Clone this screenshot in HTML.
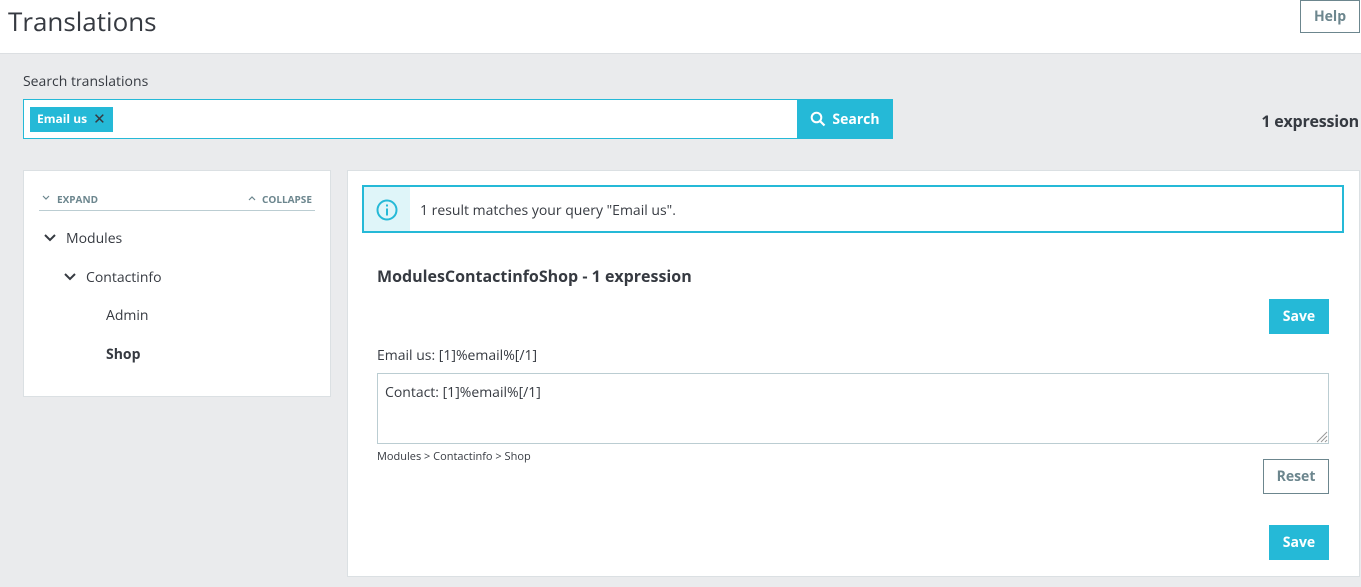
<!DOCTYPE html>
<html><head><meta charset="utf-8"><style>
*{box-sizing:border-box;margin:0;padding:0}
body{width:1361px;height:587px;background:#eaebed;font-family:"Open Sans","Liberation Sans",sans-serif;color:#363a41;position:relative;overflow:hidden}
.a{position:absolute;white-space:nowrap}
.btn{position:absolute;background:#25b9d7;color:#fff;font-weight:bold;font-size:14px;display:flex;align-items:center;justify-content:center}
</style></head><body>
<div class="a" style="left:0;top:0;width:1361px;height:54px;background:#fff;border-bottom:1px solid #dcdfe2"></div>
<div class="a" style="left:8px;top:3px;font-size:26px;color:#363a41">Translations</div>
<div class="a" style="left:1300px;top:0;width:60px;height:33px;border:1px solid #6c868e;color:#6c868e;font-weight:bold;font-size:14px;display:flex;align-items:center;justify-content:center">Help</div>

<div class="a" style="left:23px;top:72px;font-size:14px">Search translations</div>
<div class="a" style="left:23px;top:99px;width:775px;height:40px;background:#fff;border:1px solid #25b9d7"></div>
<div class="a" style="left:30px;top:107px;width:83px;height:25px;background:#25b9d7;color:#fff;font-size:12px;font-weight:bold;padding:3px 0 0 7px;line-height:17px">Email us <span style="font-weight:normal;font-size:15px;color:#363a41;position:relative;top:1px;left:3px">✕</span></div>
<div class="btn" style="left:797px;top:99px;width:96px;height:40px"><svg width="16" height="16" viewBox="0 0 16 16" style="margin-right:6px"><circle cx="6.5" cy="6.5" r="4.8" fill="none" stroke="#fff" stroke-width="2"/><path d="M10 10l4.5 4.5" stroke="#fff" stroke-width="2.2"/></svg>Search</div>
<div class="a" style="right:2px;top:110px;font-size:16px;font-weight:bold;letter-spacing:-0.2px">1 expression</div>

<div class="a" style="left:23px;top:170px;width:308px;height:227px;background:#fff;border:1px solid #dbe0e3"></div>
<svg class="a" style="left:42px;top:195px" width="8" height="6"><path d="M1 1l3 3 3-3" fill="none" stroke="#6c868e" stroke-width="1.2"/></svg>
<div class="a" style="left:57px;top:192px;font-size:10px;font-weight:bold;color:#6c868e">EXPAND</div>
<svg class="a" style="left:248px;top:195px" width="8" height="6"><path d="M1 5l3-3 3 3" fill="none" stroke="#6c868e" stroke-width="1.2"/></svg>
<div class="a" style="left:262px;top:192px;font-size:10px;font-weight:bold;color:#6c868e">COLLAPSE</div>
<div class="a" style="left:39px;top:210px;width:276px;height:1px;background:#bbcdd2"></div>
<svg class="a" style="left:44px;top:233px" width="12" height="10"><path d="M1 2l5 5 5-5" fill="none" stroke="#363a41" stroke-width="2"/></svg>
<div class="a" style="left:66px;top:229px;font-size:14px">Modules</div>
<svg class="a" style="left:64px;top:272px" width="12" height="10"><path d="M1 2l5 5 5-5" fill="none" stroke="#363a41" stroke-width="2"/></svg>
<div class="a" style="left:86px;top:268px;font-size:14px">Contactinfo</div>
<div class="a" style="left:106px;top:306px;font-size:14px">Admin</div>
<div class="a" style="left:106px;top:345px;font-size:14px;font-weight:bold">Shop</div>

<div class="a" style="left:347px;top:170px;width:1013px;height:407px;background:#fff;border:1px solid #dbe0e3"></div>
<div class="a" style="left:362px;top:185px;width:982px;height:48px;border:2px solid #25b9d7;background:#fff"></div>
<div class="a" style="left:364px;top:187px;width:46px;height:44px;background:#dff5f9"></div>
<svg class="a" style="left:376px;top:199px" width="22" height="22" viewBox="0 0 22 22"><circle cx="11" cy="11" r="9.5" fill="none" stroke="#25b9d7" stroke-width="2"/><rect x="10" y="9.5" width="2" height="7" fill="#25b9d7"/><rect x="10" y="5.5" width="2" height="2" fill="#25b9d7"/></svg>
<div class="a" style="left:420px;top:201px;font-size:14px">1 result matches your query "Email us".</div>
<div class="a" style="left:377px;top:265px;font-size:16px;font-weight:bold">ModulesContactinfoShop - 1 expression</div>
<div class="btn" style="left:1269px;top:299px;width:60px;height:35px">Save</div>
<div class="a" style="left:377px;top:346px;font-size:14px">Email us: [1]%email%[/1]</div>
<div class="a" style="left:377px;top:373px;width:952px;height:71px;border:1px solid #bbcdd2;padding:9px 7px;font-size:14px">Contact: [1]%email%[/1]</div>
<svg class="a" style="left:1314px;top:429px" width="14" height="14"><path d="M13 3L3 13M13 7L7 13M13 11L11 13" stroke="#999" stroke-width="1"/></svg>
<div class="a" style="left:377px;top:449px;font-size:11px">Modules &gt; Contactinfo &gt; Shop</div>
<div class="a" style="left:1263px;top:459px;width:66px;height:35px;border:1px solid #6c868e;color:#6c868e;font-weight:bold;font-size:14px;display:flex;align-items:center;justify-content:center">Reset</div>
<div class="btn" style="left:1269px;top:525px;width:60px;height:35px">Save</div>
</body></html>
